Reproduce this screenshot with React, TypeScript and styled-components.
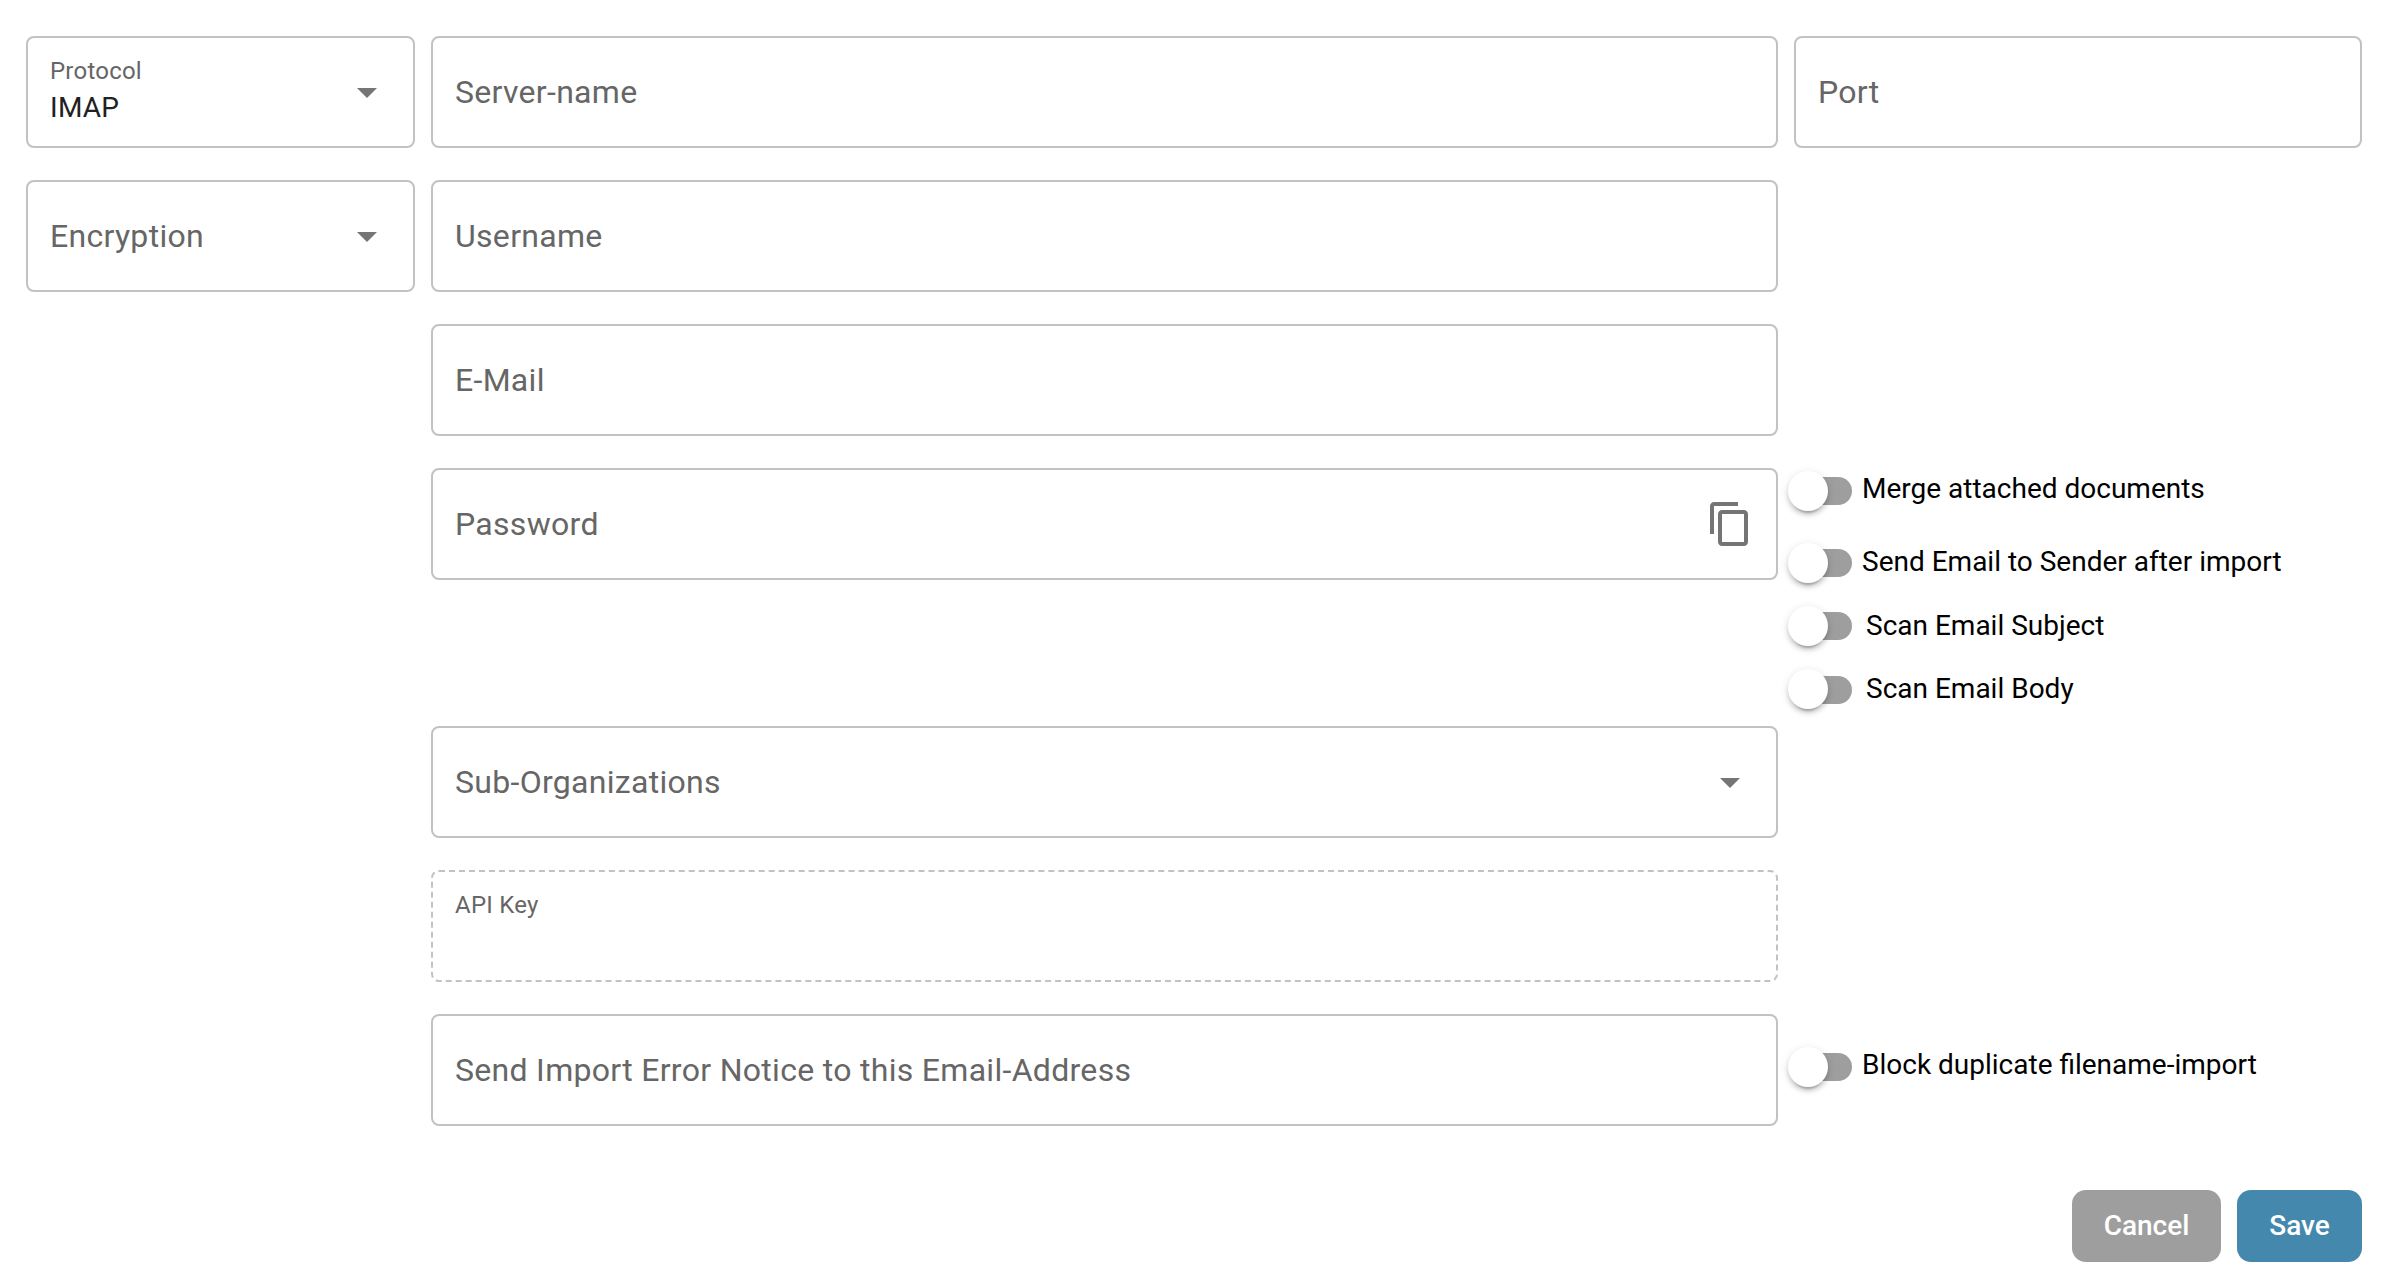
import React from "react";
import styled, { createGlobalStyle } from "styled-components";

const GlobalStyle = createGlobalStyle`
  *, *::before, *::after { box-sizing: border-box; }
  body {
    margin: 0;
    background: #fff;
    font-family: Roboto, "Liberation Sans", sans-serif;
    -webkit-font-smoothing: antialiased;
  }
`;

const Form = styled.form`
  display: flex;
  flex-direction: column;
  padding: 36px 26px 0;
`;

const Grid = styled.div`
  display: grid;
  grid-template-columns: 389px 1347px 568px;
  column-gap: 16px;
  grid-template-rows: 144px 144px 144px 258px 144px 144px 144px;
`;

const Cell = styled.div<{ $col: number; $row: number }>`
  grid-column: ${(p) => p.$col};
  grid-row: ${(p) => p.$row};
`;

const Box = styled.div<{ $dashed?: boolean }>`
  display: flex;
  align-items: center;
  height: 112px;
  padding: 0 22px;
  border: 2px ${(p) => (p.$dashed ? "dashed" : "solid")} #c2c2c2;
  border-radius: 8px;
`;

const Texts = styled.div<{ $top?: boolean }>`
  flex: 1;
  display: flex;
  flex-direction: column;
  align-self: ${(p) => (p.$top ? "flex-start" : "center")};
  padding-top: ${(p) => (p.$top ? "13px" : "0")};
`;

const Label = styled.span<{ $small?: boolean }>`
  font-size: ${(p) => (p.$small ? "24px" : "32px")};
  line-height: 40px;
  letter-spacing: 0.00937em;
  color: #666;
`;

const Value = styled.span`
  margin-top: -1px;
  font-size: 28px;
  line-height: 36px;
  letter-spacing: 0.00937em;
  color: #212121;
`;

const IconBox = styled.svg`
  width: 48px;
  height: 48px;
  fill: #757575;
`;

const ToggleRow = styled.div<{ $h: number; $gap: number }>`
  display: flex;
  align-items: center;
  height: ${(p) => p.$h}px;
  gap: ${(p) => p.$gap}px;
  font-size: 28px;
  line-height: 40px;
  color: #000;
`;

const Switch = styled.span`
  display: flex;
  align-items: center;
  width: 64px;
  height: 40px;
  margin-left: -6px;
`;

const Thumb = styled.span`
  width: 40px;
  height: 40px;
  border-radius: 50%;
  background: #fff;
  box-shadow: 0 6px 2px -4px rgba(0, 0, 0, 0.2), 0 4px 4px 0 rgba(0, 0, 0, 0.14),
    0 2px 10px 0 rgba(0, 0, 0, 0.12);
  z-index: 1;
`;

const Track = styled.span<{ $drop: number }>`
  width: 56px;
  height: 28px;
  margin-left: -32px;
  margin-top: ${(p) => p.$drop * 2}px;
  border-radius: 14px;
  background: #9e9e9e;
`;

const Caption = styled.span<{ $lift: number }>`
  margin-bottom: ${(p) => p.$lift * 2}px;
  white-space: nowrap;
`;

const Actions = styled.div`
  display: flex;
  justify-content: flex-end;
  gap: 16px;
  padding-top: 32px;
`;

const Button = styled.button<{ $bg: string; $w: number }>`
  width: ${(p) => p.$w}px;
  height: 72px;
  padding: 0;
  border: 0;
  border-radius: 14px;
  background: ${(p) => p.$bg};
  color: #fff;
  font: 500 28px/48px Roboto, sans-serif;
`;

const Arrow = () => (
  <IconBox viewBox="0 0 24 24">
    <path d="M7 10l5 5 5-5z" />
  </IconBox>
);

const Copy = () => (
  <IconBox viewBox="0 0 24 24">
    <path d="M16 1H4c-1.1 0-2 .9-2 2v14h2V3h12V1zm3 4H8c-1.1 0-2 .9-2 2v14c0 1.1.9 2 2 2h11c1.1 0 2-.9 2-2V7c0-1.1-.9-2-2-2zm0 16H8V7h11v14z" />
  </IconBox>
);

type FieldProps = {
  col: number;
  row: number;
  label: string;
  value?: string;
  dashed?: boolean;
  icon?: React.ReactNode;
};

const Field = ({ col, row, label, value, dashed, icon }: FieldProps) => {
  const floating = value !== undefined;
  return (
    <Cell $col={col} $row={row}>
      <Box $dashed={dashed}>
        <Texts $top={floating}>
          <Label $small={floating}>{label}</Label>
          {value && <Value>{value}</Value>}
        </Texts>
        {icon}
      </Box>
    </Cell>
  );
};

type ToggleProps = {
  label: string;
  h: number;
  gap?: number;
  lift?: number;
  drop?: number;
};

const Toggle = ({ label, h, gap = 10, lift = 0, drop = 0 }: ToggleProps) => (
  <ToggleRow $h={h} $gap={gap}>
    <Switch>
      <Thumb />
      <Track $drop={drop} />
    </Switch>
    <Caption $lift={lift}>{label}</Caption>
  </ToggleRow>
);

export default function App() {
  return (
    <>
      <GlobalStyle />
      <Form>
        <Grid>
          <Field col={1} row={1} label="Protocol" value="IMAP" icon={<Arrow />} />
          <Field col={2} row={1} label="Server-name" />
          <Field col={3} row={1} label="Port" />
          <Field col={1} row={2} label="Encryption" icon={<Arrow />} />
          <Field col={2} row={2} label="Username" />
          <Field col={2} row={3} label="E-Mail" />
          <Field col={2} row={4} label="Password" icon={<Copy />} />
          <Cell $col={3} $row={4}>
            <Toggle label="Merge attached documents" h={46} lift={2} />
            <Toggle label="Send Email to Sender after import" h={98} lift={1} />
            <Toggle label="Scan Email Subject" h={28} gap={14} />
            <Toggle label="Scan Email Body" h={98} gap={14} drop={1} />
          </Cell>
          <Field col={2} row={5} label="Sub-Organizations" icon={<Arrow />} />
          <Field col={2} row={6} label="API Key" value="" dashed />
          <Field col={2} row={7} label="Send Import Error Notice to this Email-Address" />
          <Cell $col={3} $row={7}>
            <Toggle label="Block duplicate filename-import" h={106} lift={2} />
          </Cell>
        </Grid>
        <Actions>
          <Button type="button" $bg="#9e9e9e" $w={149}>Cancel</Button>
          <Button type="button" $bg="#4488ad" $w={125}>Save</Button>
        </Actions>
      </Form>
    </>
  );
}
